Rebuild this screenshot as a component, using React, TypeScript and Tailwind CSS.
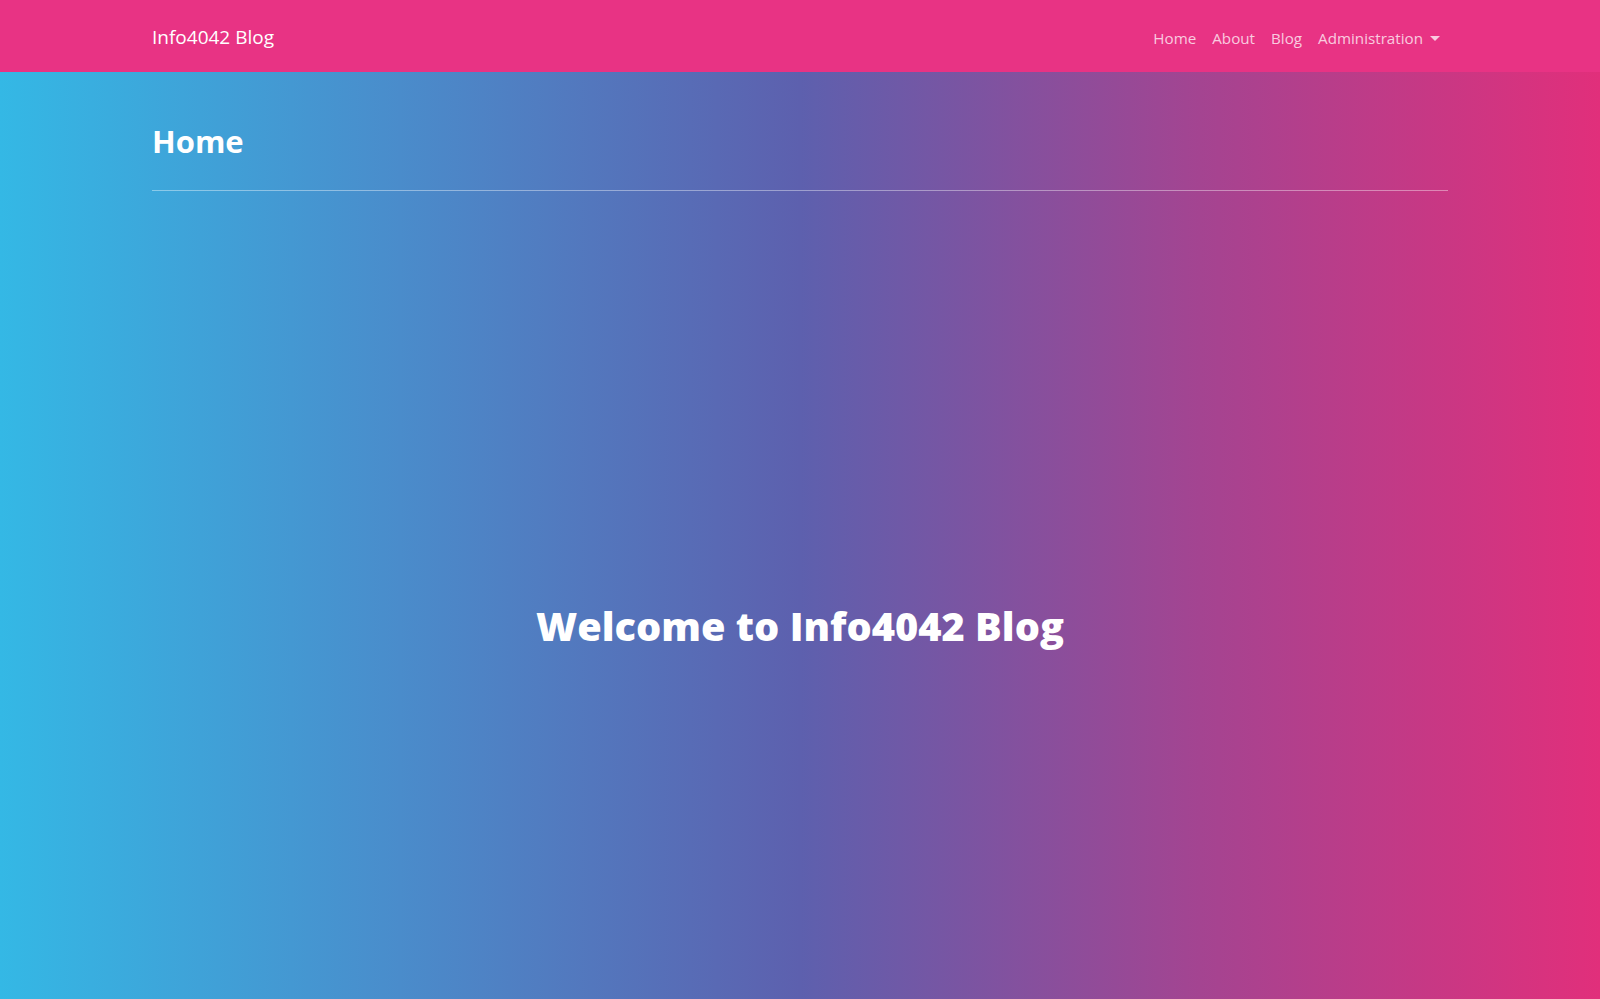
import React from "react";

export default function App() {
  const font = { fontFamily: '"Open Sans", "Noto Sans", "Liberation Sans", sans-serif' };
  return (
    <div className="min-h-[999px] w-full text-white" style={font}>
      <nav className="bg-[#e83384] h-[72px] flex items-center">
        <div className="w-[1296px] mx-auto flex items-center justify-between pt-[2px]">
          <a className="text-[19px] leading-[30px] py-[5px] text-white">Info4042 Blog</a>
          <ul className="flex items-center pt-[1px]">
            <li className="px-2 text-[15.2px] leading-6 text-white/75">Home</li>
            <li className="px-2 text-[15.2px] leading-6 text-white/75">About</li>
            <li className="px-2 text-[15.2px] leading-6 text-white/75">Blog</li>
            <li className="px-2 text-[15.2px] leading-6 text-white/75 flex items-center">
              Administration
              <span className="ml-[7px] inline-block w-0 h-0 border-l-[5px] border-r-[5px] border-t-[5px] border-l-transparent border-r-transparent border-t-white/75 mt-[1px]" />
            </li>
          </ul>
        </div>
      </nav>
      <main className="min-h-[927px] bg-[linear-gradient(to_right,#34b8e5_0%,#4a8ccb_25%,#5d60ae_50%,#a44491_75%,#e12f7b_100%)]">
        <div className="w-[1296px] mx-auto">
          <h2 className="pt-[50px] text-[31px] leading-[38px] font-bold">Home</h2>
          <hr className="mt-[30px] border-0 border-t border-white/40" />
          <div className="h-[736px] flex items-center justify-center">
            <h1 className="text-[39.7px] leading-[48px] font-extrabold text-center pt-[134px]">Welcome to Info4042 Blog</h1>
          </div>
        </div>
      </main>
    </div>
  );
}
